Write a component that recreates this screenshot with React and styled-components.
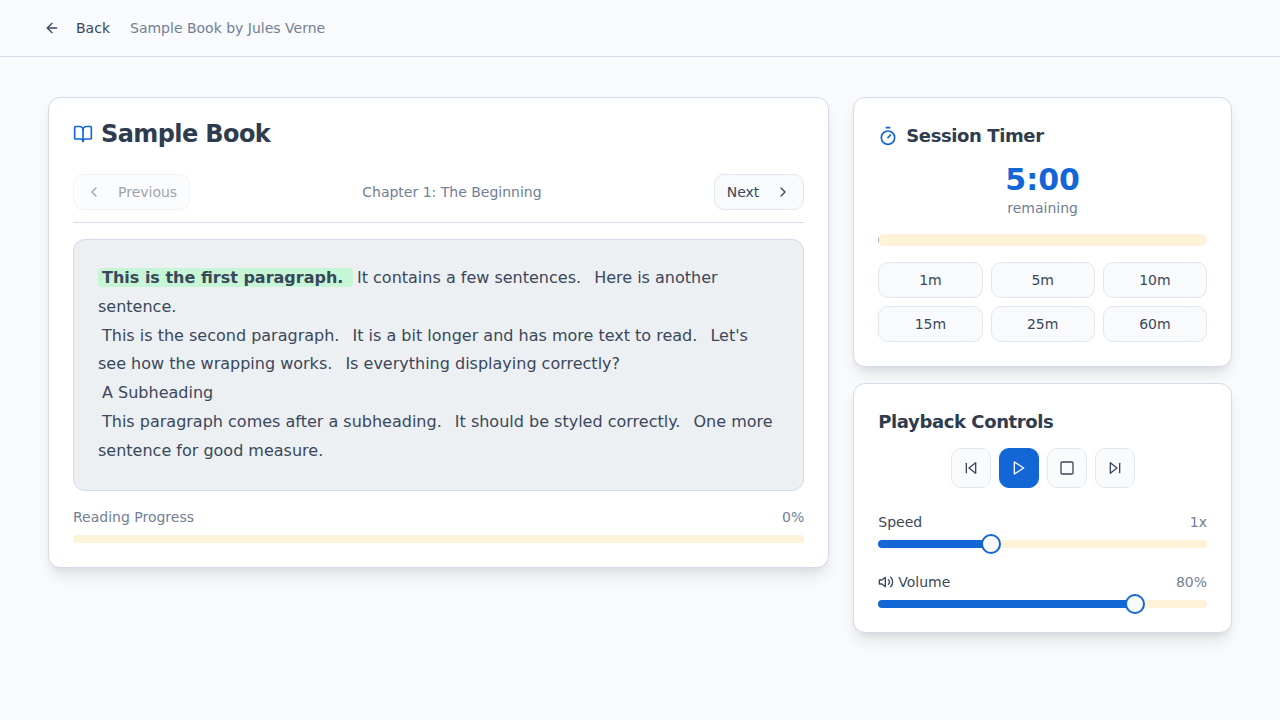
import React from "react";
import styled, { createGlobalStyle } from "styled-components";
import { ArrowLeft, BookOpen, ChevronLeft, ChevronRight, Timer } from "lucide-react";

const BLUE = "#1366d6";
const TRACK = "#fdf3d8";
const TITLE = "#2f3c50";
const INK = "#3b475b";
const MUTED = "#718096";
const LINE = "#d3dbe9";
const SOFT = "#e2e8f0";
const PAGE = "#f8fafc";

const Global = createGlobalStyle`
  * { box-sizing: border-box; }
  html, body { margin: 0; padding: 0; background: ${PAGE}; }
  body { font-family: "DejaVu Sans", sans-serif; color: ${INK}; font-size: 14px; line-height: 20px; }
  button { font-family: inherit; }
`;

const Page = styled.div`
  min-height: 720px;
  background: ${PAGE};
`;
const Header = styled.header`
  height: 57px;
  border-bottom: 1px solid ${LINE};
  padding: 0 32px;
  display: flex;
  align-items: center;
  gap: 8px;
`;
const BackButton = styled.button`
  display: flex;
  align-items: center;
  gap: 16px;
  height: 36px;
  padding: 0 12px;
  background: transparent;
  border: none;
  color: ${INK};
  font-size: 14px;
`;
const Subtitle = styled.span`
  font-size: 14px;
  color: ${MUTED};
`;
const Main = styled.main`
  display: grid;
  grid-template-columns: 781.3px 1fr;
  gap: 24px;
  padding: 40px 48px;
  align-items: start;
`;
const Card = styled.section`
  background: #fff;
  border: 1px solid ${LINE};
  border-radius: 12px;
  padding: 24px;
  box-shadow: 0 10px 15px -3px rgba(0, 0, 0, 0.1), 0 4px 6px -2px rgba(0, 0, 0, 0.05);
`;
const Sidebar = styled.aside`
  display: flex;
  flex-direction: column;
  gap: 16px;
`;
const BookTitle = styled.h1`
  display: flex;
  align-items: center;
  gap: 8px;
  margin: 0 0 28px;
  font-size: 24px;
  line-height: 24px;
  font-weight: 700;
  letter-spacing: -0.025em;
  color: ${BLUE};
  span { color: ${TITLE}; }
`;
const ChapterNav = styled.nav`
  display: flex;
  align-items: center;
  justify-content: space-between;
  padding-bottom: 12px;
  border-bottom: 1px solid ${LINE};
  margin-bottom: 16px;
`;
const NavButton = styled.button`
  display: flex;
  align-items: center;
  gap: 16px;
  height: 36px;
  padding: 0 12px;
  border: 1px solid ${SOFT};
  border-radius: 10px;
  background: ${PAGE};
  color: ${INK};
  font-size: 14px;
  opacity: ${(p) => (p.disabled ? 0.5 : 1)};
`;
const ChapterName = styled.span`
  font-size: 14px;
  color: ${MUTED};
`;
const Reader = styled.article`
  background: #ecf0f3;
  border: 1px solid ${LINE};
  border-radius: 12px;
  padding: 24px;
  font-size: 16px;
  line-height: 28.8px;
  margin-bottom: 16px;
`;
const Paragraph = styled.div``;
const Sentence = styled.span`
  padding: 0 4px;
  border-radius: 4px;
  white-space: pre-wrap;
  ${(p) => p.$active && `background: #c6f6d5; font-weight: 700;`}
`;
const Row = styled.div`
  display: flex;
  align-items: center;
  justify-content: space-between;
  margin-bottom: 8px;
`;
const Label = styled.span`
  display: flex;
  align-items: center;
  gap: 4px;
  font-size: 14px;
  color: ${(p) => (p.$muted ? MUTED : INK)};
`;
const Bar = styled.div`
  height: ${(p) => p.$h}px;
  border-radius: ${(p) => p.$h / 2}px;
  background: ${TRACK};
  overflow: hidden;
`;
const BarFill = styled.div`
  height: 100%;
  background: ${BLUE};
  opacity: 0.45;
`;
const PanelTitle = styled.h2`
  display: flex;
  align-items: center;
  gap: 8px;
  margin: 0 0 12px;
  font-size: 18px;
  line-height: 28px;
  font-weight: 700;
  letter-spacing: -0.022em;
  color: ${BLUE};
  span { color: ${TITLE}; }
`;
const Clock = styled.div`
  text-align: center;
  font-size: 30px;
  line-height: 36px;
  font-weight: 700;
  color: ${BLUE};
`;
const Remaining = styled.div`
  text-align: center;
  font-size: 14px;
  line-height: 20px;
  color: ${MUTED};
  margin-bottom: 16px;
`;
const Presets = styled.div`
  display: grid;
  grid-template-columns: repeat(3, 1fr);
  gap: 8px;
  margin-top: 16px;
`;
const Preset = styled.button`
  height: 36px;
  border: 1px solid ${SOFT};
  border-radius: 10px;
  background: ${PAGE};
  color: ${INK};
  font-size: 14px;
`;
const Transport = styled.div`
  display: flex;
  justify-content: center;
  gap: 8px;
  margin-bottom: 24px;
`;
const TransportButton = styled.button`
  width: 40px;
  height: 40px;
  padding: 0;
  display: flex;
  align-items: center;
  justify-content: center;
  border-radius: 10px;
  border: 1px solid ${(p) => (p.$primary ? BLUE : SOFT)};
  background: ${(p) => (p.$primary ? BLUE : PAGE)};
  color: ${(p) => (p.$primary ? "#f8fafc" : INK)};
`;
const SliderGroup = styled.div`
  & + & { margin-top: 24px; }
`;
const SliderTrack = styled.div`
  position: relative;
  height: 8px;
  border-radius: 4px;
  background: ${TRACK};
`;
const SliderFill = styled.div`
  position: absolute;
  left: 0;
  top: 0;
  bottom: 0;
  border-radius: 4px;
  background: ${BLUE};
`;
const SliderThumb = styled.div`
  position: absolute;
  top: -6px;
  width: 20px;
  height: 20px;
  margin-left: -10px;
  border-radius: 50%;
  background: ${PAGE};
  border: 2px solid ${BLUE};
`;

const Glyph = ({ children }) => (
  <svg width="16" height="16" viewBox="0 0 24 24" fill="none" stroke="currentColor" strokeWidth="2" strokeLinecap="round" strokeLinejoin="round">
    {children}
  </svg>
);
const SkipBackIcon = () => (
  <Glyph><polygon points="19 20 9 12 19 4 19 20" /><line x1="5" y1="19" x2="5" y2="5" /></Glyph>
);
const PlayIcon = () => (
  <Glyph><polygon points="5 3 19 12 5 21 5 3" /></Glyph>
);
const StopIcon = () => (
  <Glyph><rect x="3" y="3" width="18" height="18" rx="2" ry="2" /></Glyph>
);
const SkipForwardIcon = () => (
  <Glyph><polygon points="5 4 15 12 5 20 5 4" /><line x1="19" y1="5" x2="19" y2="19" /></Glyph>
);
const VolumeIcon = () => (
  <Glyph>
    <polygon points="11 5 6 9 2 9 2 15 6 15 11 19 11 5" />
    <path d="M15.54 8.46a5 5 0 0 1 0 7.07" />
    <path d="M19.07 4.93a10 10 0 0 1 0 14.14" />
  </Glyph>
);

function Slider({ value }) {
  const pos = `calc(10px + (100% - 20px) * ${value})`;
  return (
    <SliderTrack>
      <SliderFill style={{ width: pos }} />
      <SliderThumb style={{ left: pos }} />
    </SliderTrack>
  );
}

const paragraphs = [
  ["This is the first paragraph. ", "It contains a few sentences. ", "Here is another sentence. "],
  ["This is the second paragraph. ", "It is a bit longer and has more text to read. ", "Let's see how the wrapping works. ", "Is everything displaying correctly? "],
  ["A Subheading "],
  ["This paragraph comes after a subheading. ", "It should be styled correctly. ", "One more sentence for good measure. "],
];

export default function App() {
  return (
    <Page>
      <Global />
      <Header>
        <BackButton><ArrowLeft size={16} />Back</BackButton>
        <Subtitle>Sample Book by Jules Verne</Subtitle>
      </Header>
      <Main>
        <Card>
          <BookTitle><BookOpen size={20} /><span>Sample Book</span></BookTitle>
          <ChapterNav>
            <NavButton disabled><ChevronLeft size={16} />Previous</NavButton>
            <ChapterName>Chapter 1: The Beginning</ChapterName>
            <NavButton>Next<ChevronRight size={16} /></NavButton>
          </ChapterNav>
          <Reader>
            {paragraphs.map((sentences, i) => (
              <Paragraph key={i}>
                {sentences.map((s, j) => (
                  <Sentence key={j} $active={i === 0 && j === 0}>{s}</Sentence>
                ))}
              </Paragraph>
            ))}
          </Reader>
          <Row>
            <Label $muted>Reading Progress</Label>
            <Label $muted>0%</Label>
          </Row>
          <Bar $h={8}><BarFill style={{ width: "0%" }} /></Bar>
        </Card>
        <Sidebar>
          <Card>
            <PanelTitle><Timer size={20} /><span>Session Timer</span></PanelTitle>
            <Clock>5:00</Clock>
            <Remaining>remaining</Remaining>
            <Bar $h={12}><BarFill style={{ width: "0.1%" }} /></Bar>
            <Presets>
              {["1m", "5m", "10m", "15m", "25m", "60m"].map((m) => <Preset key={m}>{m}</Preset>)}
            </Presets>
          </Card>
          <Card>
            <PanelTitle><span>Playback Controls</span></PanelTitle>
            <Transport>
              <TransportButton><SkipBackIcon /></TransportButton>
              <TransportButton $primary><PlayIcon /></TransportButton>
              <TransportButton><StopIcon /></TransportButton>
              <TransportButton><SkipForwardIcon /></TransportButton>
            </Transport>
            <SliderGroup>
              <Row><Label>Speed</Label><Label $muted>1x</Label></Row>
              <Slider value={1 / 3} />
            </SliderGroup>
            <SliderGroup>
              <Row><Label><VolumeIcon />Volume</Label><Label $muted>80%</Label></Row>
              <Slider value={0.8} />
            </SliderGroup>
          </Card>
        </Sidebar>
      </Main>
    </Page>
  );
}
